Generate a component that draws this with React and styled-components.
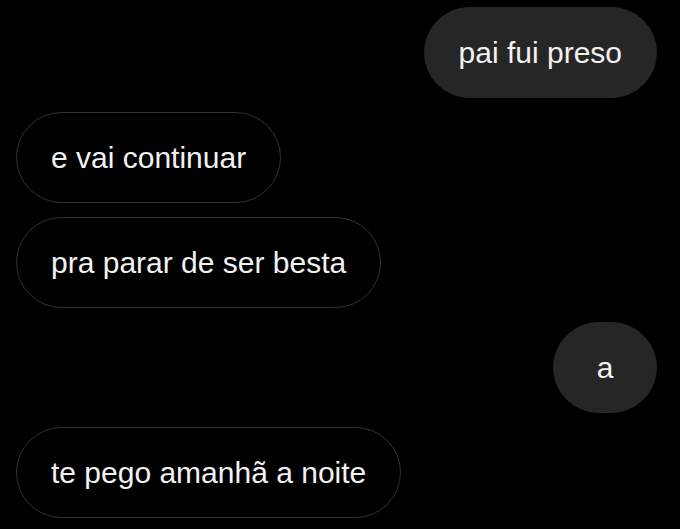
import React from 'react';
import styled, { createGlobalStyle } from 'styled-components';

const GlobalStyle = createGlobalStyle`
  html, body {
    margin: 0;
    padding: 0;
    background: #000;
  }
`;

const Thread = styled.div`
  display: flex;
  flex-direction: column;
  gap: 14px;
  padding: 7px 23px 0 16px;
  height: 529px;
  box-sizing: border-box;
  overflow: hidden;
  background: #000;
  font-family: "Liberation Sans", Arial, sans-serif;
`;

const Bubble = styled.div`
  align-self: ${(props) => (props.mine ? 'flex-end' : 'flex-start')};
  box-sizing: border-box;
  height: 91px;
  min-width: 104px;
  padding: 0 34px;
  display: flex;
  align-items: center;
  justify-content: center;
  border-radius: 46px;
  background: ${(props) => (props.mine ? '#262626' : '#000')};
  border: 1.5px solid ${(props) => (props.mine ? '#262626' : '#333')};
  color: #f2f2f2;
  font-size: 30px;
  white-space: nowrap;
`;

const messages = [
  { text: 'pai fui preso', mine: true },
  { text: 'e vai continuar' },
  { text: 'pra parar de ser besta' },
  { text: 'a', mine: true },
  { text: 'te pego amanhã a noite' },
];

const App = () => {
  return (
    <>
      <GlobalStyle />
      <Thread>
        {messages.map((m, i) => (
          <Bubble key={i} mine={m.mine}>
            {m.text}
          </Bubble>
        ))}
      </Thread>
    </>
  );
};

export default App;
